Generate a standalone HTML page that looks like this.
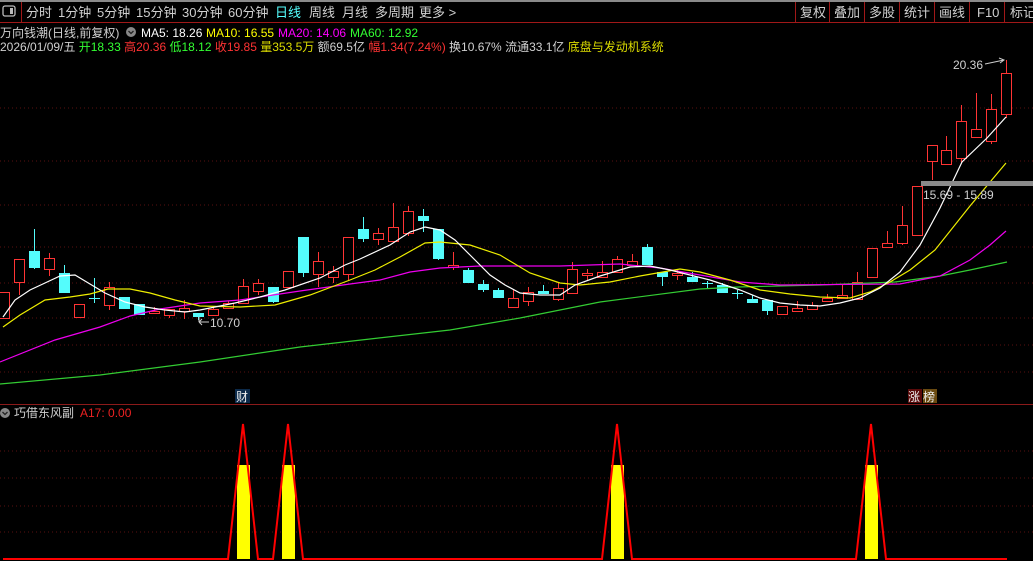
<!DOCTYPE html>
<html><head><meta charset="utf-8"><style>
html,body{margin:0;padding:0;background:#000;overflow:hidden}
svg{display:block}
text{font-family:"Liberation Sans","Noto Sans CJK SC",sans-serif}
</style></head><body>
<svg id="s" width="1033" height="561" viewBox="0 0 1033 561" xmlns="http://www.w3.org/2000/svg">
<rect width="1033" height="561" fill="#000"/>
<!-- top bar -->
<rect x="0" y="0" width="1033" height="2" fill="#8a8a8a"/>
<rect x="0" y="22" width="1033" height="1" fill="#a01818"/>
<rect x="21" y="2" width="1" height="20" fill="#a01818"/>
<rect x="3" y="6" width="12" height="10" rx="2" fill="none" stroke="#bbb" stroke-width="1.3"/>
<rect x="10" y="8" width="3" height="6" fill="#bbb"/>
<g font-size="13" fill="#d0d0d0">
<text x="26" y="17">分时</text><text x="58" y="17">1分钟</text><text x="97" y="17">5分钟</text>
<text x="136" y="17">15分钟</text><text x="182" y="17">30分钟</text><text x="228" y="17">60分钟</text>
<text x="275" y="17" fill="#5ff">日线</text><text x="309" y="17">周线</text><text x="342" y="17">月线</text>
<text x="375" y="17">多周期</text><text x="419" y="17">更多 &gt;</text>
<text x="800" y="17">复权</text><text x="834" y="17">叠加</text><text x="869" y="17">多股</text>
<text x="904" y="17">统计</text><text x="939" y="17">画线</text><text x="977" y="17">F10</text><text x="1010" y="17">标记</text>
</g>
<g fill="#a01818"><rect x="795" y="2" width="1" height="20"/><rect x="829" y="2" width="1" height="20"/><rect x="864" y="2" width="1" height="20"/><rect x="899" y="2" width="1" height="20"/><rect x="934" y="2" width="1" height="20"/><rect x="969" y="2" width="1" height="20"/><rect x="1004" y="2" width="1" height="20"/></g>
<!-- legend -->
<g font-size="12">
<text x="0" y="37" fill="#d0d0d0">万向钱潮(日线,前复权)</text>
<circle cx="131" cy="32" r="5" fill="#888"/><path d="M128.5 31l2.5 2.5 2.5-2.5" stroke="#222" fill="none" stroke-width="1.3"/>
<text x="141" y="37" fill="#fff">MA5: 18.26</text>
<text x="206" y="37" fill="#ff0">MA10: 16.55</text>
<text x="278" y="37" fill="#f0f">MA20: 14.06</text>
<text x="350" y="37" fill="#3f3">MA60: 12.92</text>
<text x="0" y="51"><tspan fill="#d0d0d0">2026/01/09/五 </tspan><tspan fill="#3f3">开18.33 </tspan><tspan fill="#f33">高20.36 </tspan><tspan fill="#3f3">低18.12 </tspan><tspan fill="#f33">收19.85 </tspan><tspan fill="#dd0">量353.5万 </tspan><tspan fill="#d0d0d0">额69.5亿 </tspan><tspan fill="#f33">幅1.34(7.24%) </tspan><tspan fill="#d0d0d0">换10.67% 流通33.1亿 </tspan><tspan fill="#dd0">底盘与发动机系统</tspan></text>
</g>
<!-- grid -->
<g stroke="#5a1010" stroke-dasharray="1,3" stroke-width="1">
<line x1="0" y1="108" x2="1033" y2="108"/><line x1="0" y1="161" x2="1033" y2="161"/>
<line x1="0" y1="205" x2="1033" y2="205"/><line x1="0" y1="247" x2="1033" y2="247"/>
<line x1="0" y1="283" x2="1033" y2="283"/><line x1="0" y1="318" x2="1033" y2="318"/>
<line x1="0" y1="345" x2="1033" y2="345"/><line x1="0" y1="372" x2="1033" y2="372"/>
<line x1="0" y1="451" x2="1033" y2="451"/><line x1="0" y1="478" x2="1033" y2="478"/>
<line x1="0" y1="506" x2="1033" y2="506"/><line x1="0" y1="532" x2="1033" y2="532"/>
</g>
<g id="candles"></g>
<!-- MAs -->
<g fill="none" stroke-width="1.2">
<polyline stroke="#3c3" points="0,384 100,375 200,362 300,347 370,339 450,330 520,318 600,302 700,289 738,287 820,285 895,282 940,276 970,270 1007,262"/>
<polyline stroke="#e0e" points="0,362 55,340 100,327 130,316 160,309 200,303 240,300 300,291 350,284 380,280 410,272 440,268 480,266 560,266 620,264 660,268 700,275 740,282 780,285 900,284 940,276 970,260 990,245 1006,231"/>
<polyline stroke="#ee0" points="3,327 20,315 45,300 70,297 90,294 108,289 130,289 150,293 175,300 200,306 240,307 275,305 310,295 350,280 375,270 400,257 425,243 440,242 470,245 500,255 530,273 560,283 580,285 610,282 640,276 680,269 700,272 730,280 760,290 790,294 820,297 850,298 870,292 890,282 910,270 935,250 970,206 1006,163"/>
<polyline stroke="#fff" points="3,317 15,300 30,290 45,283 60,276 75,275 90,284 105,293 125,302 145,307 165,310 185,312 200,310 215,307 235,303 260,297 285,290 320,278 345,265 360,259 390,245 410,232 425,227 440,230 455,240 470,255 490,275 505,285 520,293 540,295 560,295 575,285 600,276 630,267 650,266 670,270 690,275 710,280 740,290 760,298 780,303 800,305 820,306 840,303 860,298 880,288 900,272 920,245 940,208 962,162 987,138 1006,117"/>
</g>
<!-- annotations -->
<rect x="921" y="181" width="112" height="5" fill="#8a8a8a"/>
<g font-size="12" fill="#d0d0d0">
<text x="923" y="199">15.69 - 15.89</text>
<text x="953" y="69">20.36</text>
<text x="210" y="327">10.70</text>
</g>
<path d="M985 64 L1004 60 M999 58 L1004 60 L1000 63" stroke="#ccc" fill="none"/>
<path d="M199 322 L209 322 M199 322 L202 319 M199 322 L202 325 M199 317 L199 322" stroke="#ccc" fill="none"/>
<rect x="235" y="389" width="15" height="14" fill="#0c2a4a"/>
<text x="236" y="401" font-size="12" fill="#eee">财</text>
<rect x="908" y="389" width="14" height="14" fill="#5a0a0a"/>
<rect x="923" y="389" width="14" height="14" fill="#6a4a10"/>
<text x="908" y="401" font-size="12" fill="#eee">涨</text><text x="923" y="401" font-size="12" fill="#eee">榜</text>
<!-- separator -->
<rect x="0" y="404" width="1033" height="1" fill="#8b1a1a"/>
<circle cx="5" cy="413" r="5" fill="#888"/><path d="M2.5 412l2.5 2.5 2.5-2.5" stroke="#222" fill="none" stroke-width="1.3"/>
<text x="14" y="417" font-size="12" fill="#d0d0d0">巧借东风副</text>
<text x="80" y="417" font-size="12" fill="#e22">A17: 0.00</text>
<!-- indicator -->
<g fill="#ff0">
<rect x="237" y="465" width="13" height="94"/><rect x="282" y="465" width="13" height="94"/>
<rect x="611" y="465" width="13" height="94"/><rect x="865" y="465" width="13" height="94"/>
</g>
<polyline fill="none" stroke="#f00" stroke-width="2" points="3,559 228,559 243,424 258,559 273,559 288,424 303,559 602,559 617,424 632,559 856,559 871,424 886,559 1007,559"/>
</svg>
<script>
var d=[[292,318,292,318,'r'],[259,282,259,295,'r'],[251,268,229,269,'c'],[258,269,253,276,'r'],[273,293,265,293,'c'],[304,317,304,317,'r'],[298,299,278,303,'c'],[287,305,282,310,'r'],[297,309,297,309,'c'],[304,315,304,315,'c'],[311,313,307,314,'r'],[309,315,309,318,'r'],[308,311,300,319,'r'],[313,317,313,320,'c'],[309,315,307,315,'r'],[303,308,301,308,'r'],[286,303,279,303,'r'],[283,291,279,295,'r'],[287,302,287,303,'c'],[271,287,271,287,'r'],[237,273,237,277,'c'],[261,274,252,287,'r'],[271,277,266,283,'r'],[237,274,237,280,'r'],[229,239,217,242,'c'],[233,239,228,245,'r'],[227,241,203,241,'r'],[211,233,206,236,'r'],[216,221,209,232,'c'],[229,259,229,260,'c'],[265,267,252,270,'r'],[270,283,268,283,'c'],[284,290,280,292,'c'],[290,298,288,298,'c'],[298,307,290,307,'r'],[292,301,287,306,'r'],[291,294,285,294,'c'],[288,299,283,301,'r'],[269,293,262,294,'r'],[273,275,269,280,'r'],[272,277,261,277,'r'],[259,272,256,272,'r'],[261,265,254,265,'r'],[247,265,244,265,'c'],[272,277,272,286,'c'],[273,275,270,280,'r'],[277,282,272,282,'c'],[283,284,281,289,'c'],[285,293,283,293,'c'],[293,294,290,299,'c'],[299,303,295,303,'c'],[300,311,300,315,'c'],[306,314,306,314,'r'],[308,311,301,311,'r'],[305,309,302,309,'r'],[298,301,294,301,'r'],[295,298,285,298,'r'],[282,299,272,299,'r'],[248,277,248,277,'r'],[243,247,231,247,'r'],[225,243,206,245,'r'],[186,235,186,235,'r'],[145,161,145,180,'r'],[150,164,136,164,'r'],[121,158,105,163,'r'],[129,137,93,137,'r'],[109,141,94,144,'r'],[73,114,60,118,'r']];
var h='';
d.forEach(function(c,i){var x=4+i*14.96,cx=Math.round(x)+0.5,col=c[4]=='r'?'#ff3434':'#54fcfc';
h+='<line x1="'+cx+'" y1="'+c[2]+'" x2="'+cx+'" y2="'+c[3]+'" stroke="'+col+'"/>';
var hh=Math.max(c[1]-c[0],1);
if(c[4]=='r')h+='<rect x="'+(cx-5)+'" y="'+(c[0]+0.5)+'" width="10" height="'+hh+'" fill="#000" stroke="'+col+'"/>';
else h+='<rect x="'+(cx-5.5)+'" y="'+c[0]+'" width="11" height="'+hh+'" fill="'+col+'"/>';});
document.getElementById('candles').innerHTML=h;
</script>
</body></html>
